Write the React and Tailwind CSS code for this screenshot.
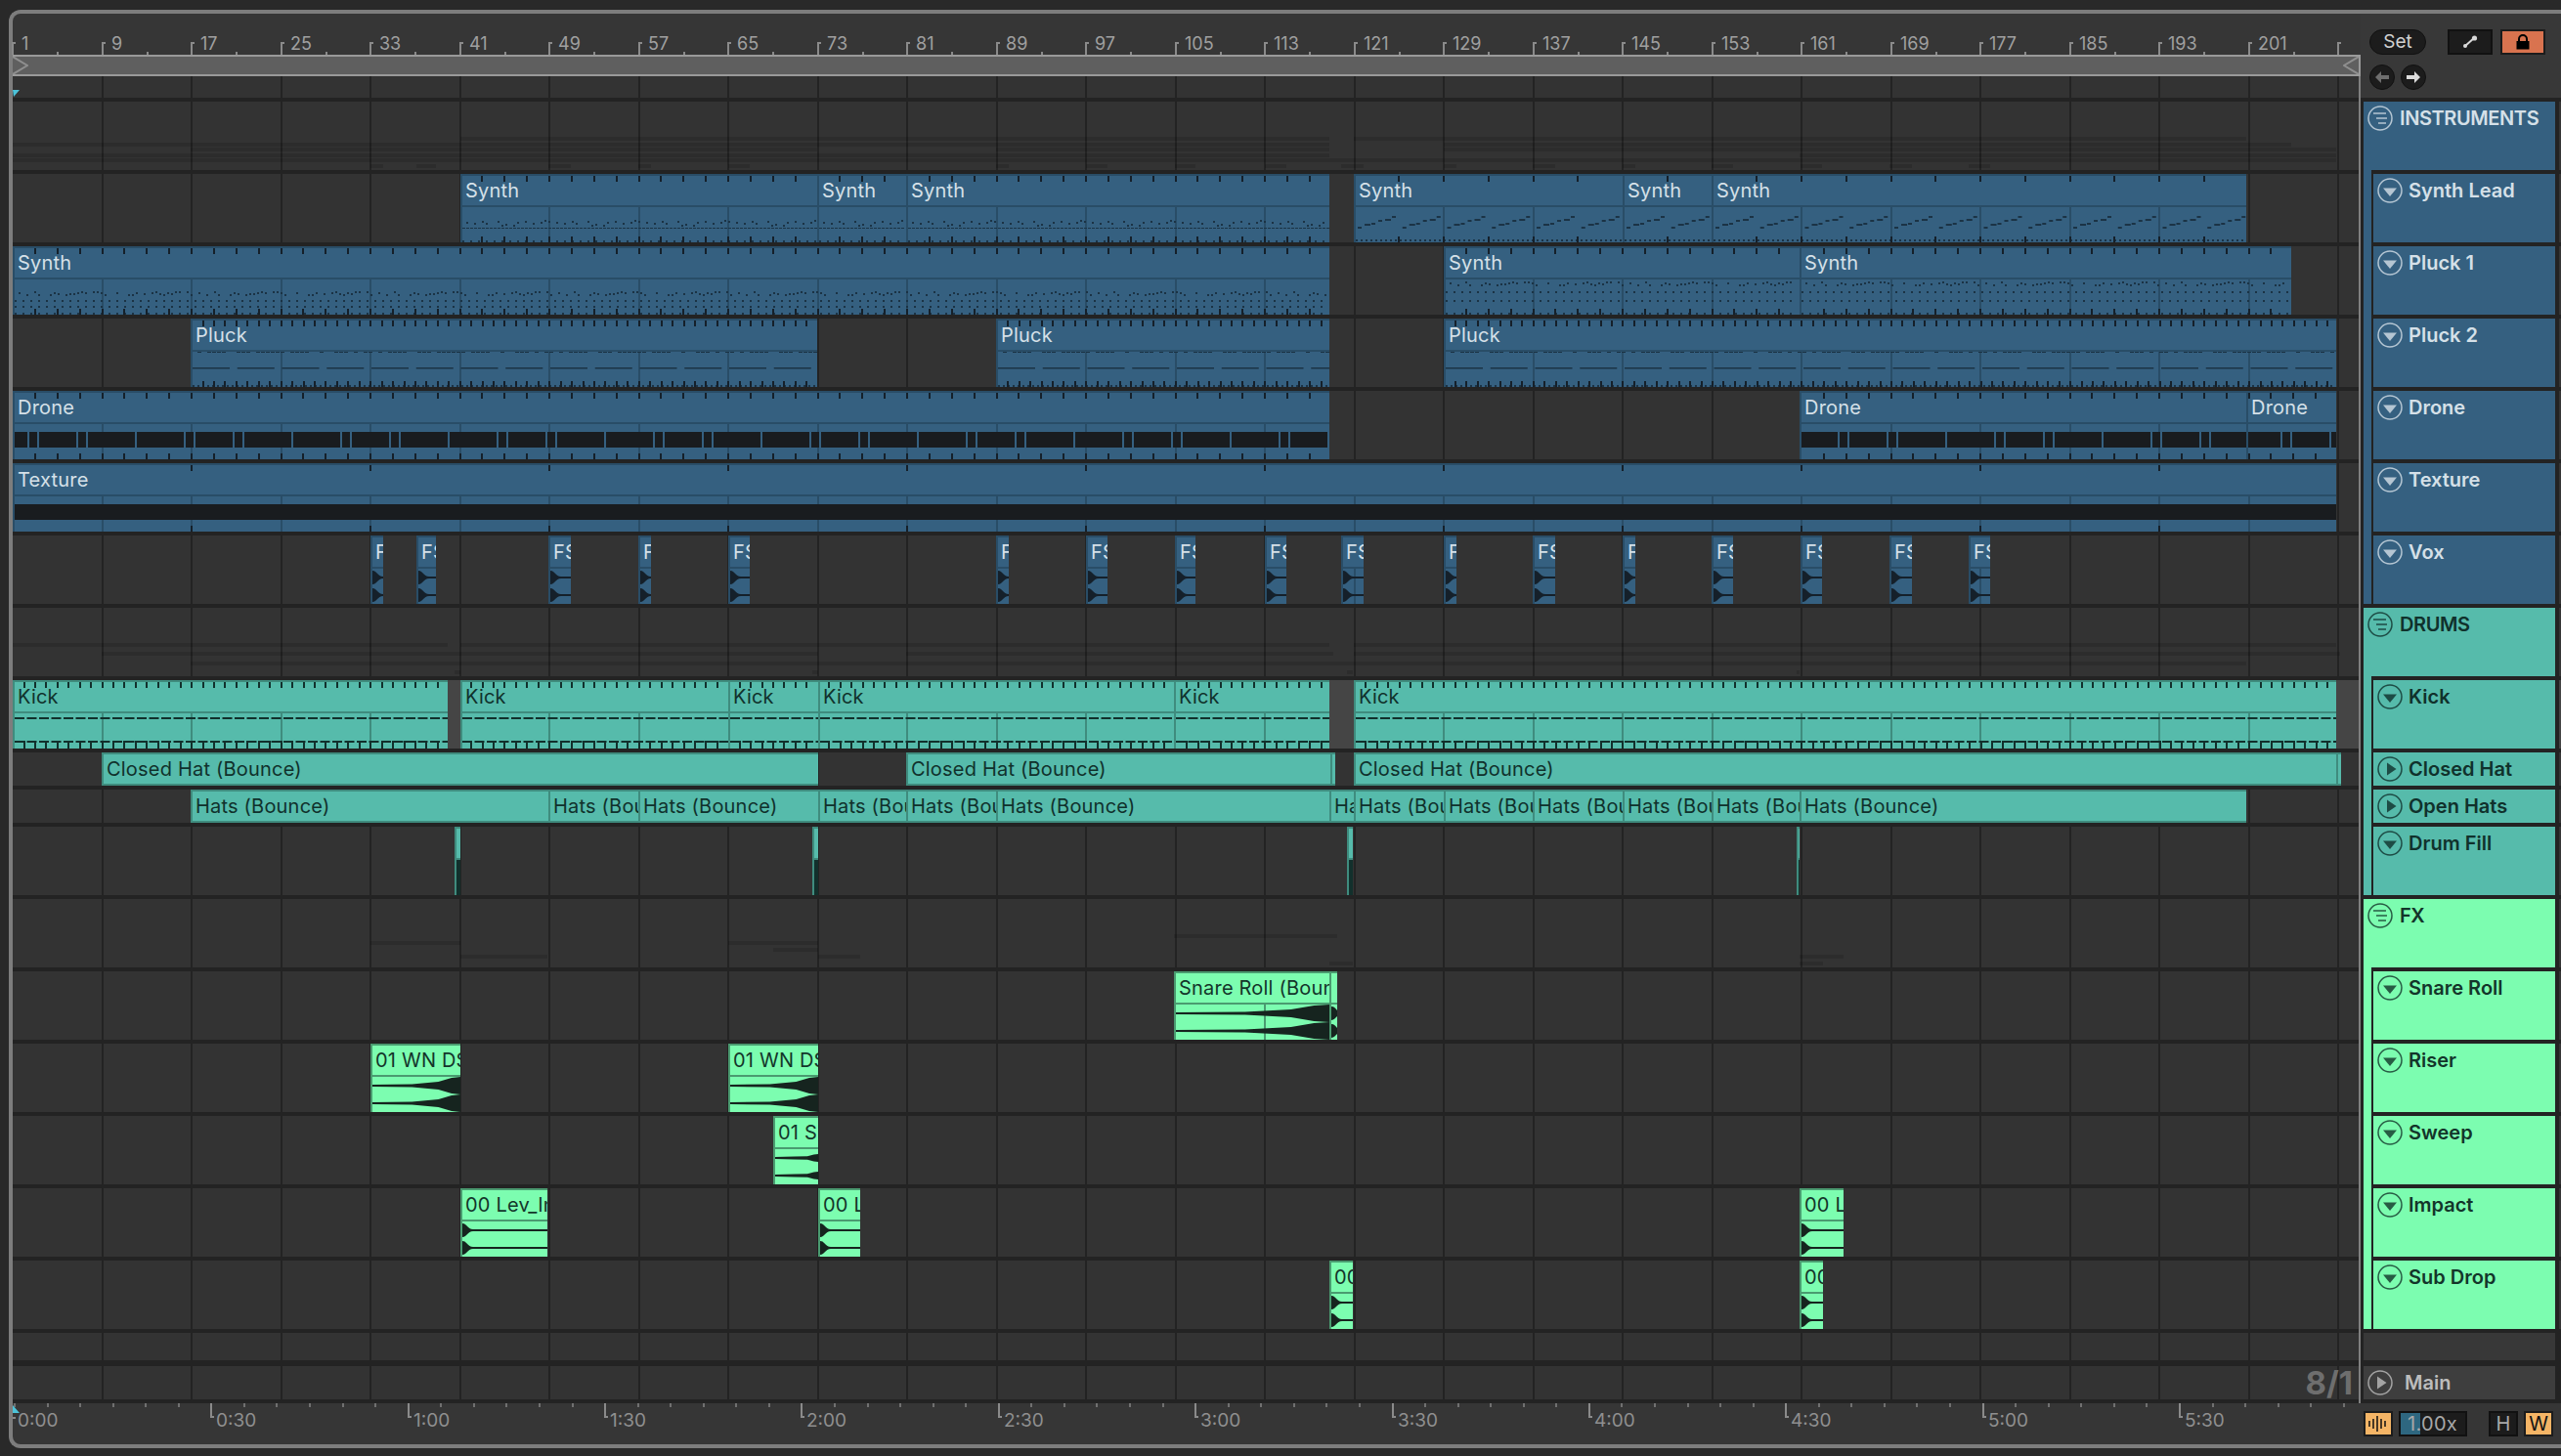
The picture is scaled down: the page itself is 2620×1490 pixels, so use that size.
const barX = (k) => Math.floor(12.6 + 91.5 * k);
const R = (x, y, w, h) => `M${x} ${y}h${w}v${h}h${-w}z`;
const rand = (i) => {
  const s = Math.sin(i * 12.9898) * 43758.5453;
  return s - Math.floor(s);
};

const themes = {
  blue: {
    bg: 'bg-[#356080]', text: 'text-[#d5e0e8]', border: 'border-[#294d67]', sep: 'bg-[#294d67]',
    line: '#294d67', dark: '#15202a', faint: '#1b3345',
  },
  teal: {
    bg: 'bg-[#56bbab]', text: 'text-[#10312c]', border: 'border-[#3f8c7e]', sep: 'bg-[#3f8c7e]',
    line: '#3f8c7e', dark: '#12302c', faint: '#3f8c7e',
  },
  mint: {
    bg: 'bg-[#7cfdb0]', text: 'text-[#13352a]', border: 'border-[#4a9b70]', sep: 'bg-[#4a9b70]',
    line: '#4a9b70', dark: '#16241f', faint: '#4a9b70',
  },
};

const fsClips = [
  [379, 392], [426, 446], [561, 584], [653, 666], [745, 767], [1019, 1032], [1111, 1133], [1202, 1223], [1294, 1316],
  [1372, 1395], [1477, 1490], [1568, 1591], [1660, 1673], [1751, 1773], [1842, 1864], [1933, 1956], [2014, 2036],
].map(([a, b]) => [a, b, 'FS', 'decay']);

const tracks = [
  { name: 'INSTRUMENTS', theme: 'blue', group: true, h: 70 },
  { name: 'Synth Lead', theme: 'blue', h: 70, clips: [
    [471, 836, 'Synth', 'riseDots'], [836, 927, 'Synth', 'riseDots'], [927, 1360, 'Synth', 'riseDots'],
    [1385, 1660, 'Synth', 'rise'], [1660, 1751, 'Synth', 'rise'], [1751, 2298, 'Synth', 'rise'],
  ] },
  { name: 'Pluck 1', theme: 'blue', h: 70, clips: [
    [13, 1360, 'Synth', 'dotsA'], [1477, 1841, 'Synth', 'dotsB'], [1841, 2344, 'Synth', 'dotsB'],
  ] },
  { name: 'Pluck 2', theme: 'blue', h: 70, clips: [
    [195, 836, 'Pluck', 'pluck'], [1019, 1360, 'Pluck', 'pluck'], [1477, 2390, 'Pluck', 'pluck'],
  ] },
  { name: 'Drone', theme: 'blue', h: 70, clips: [
    [13, 1360, 'Drone', 'drone'], [1841, 2298, 'Drone', 'drone'], [2298, 2390, 'Drone', 'drone'],
  ] },
  { name: 'Texture', theme: 'blue', h: 70, clips: [[13, 2390, 'Texture', 'band']] },
  { name: 'Vox', theme: 'blue', h: 70, last: true, clips: fsClips },
  { name: 'DRUMS', theme: 'teal', group: true, h: 70 },
  { name: 'Kick', theme: 'teal', h: 70, gaps: [[458, 471], [1360, 1385], [2390, 2413]], clips: [
    [13, 458, 'Kick', 'kick'], [471, 745, 'Kick', 'kick'], [745, 837, 'Kick', 'kick'], [837, 1201, 'Kick', 'kick'],
    [1201, 1360, 'Kick', 'kick'], [1385, 2390, 'Kick', 'kick'],
  ] },
  { name: 'Closed Hat', theme: 'teal', h: 34, closed: true, clips: [
    [104, 837, 'Closed Hat (Bounce)'], [927, 1361, 'Closed Hat (Bounce)'], [1361, 1364, ''],
    [1385, 2390, 'Closed Hat (Bounce)'], [2390, 2394, ''],
  ] },
  { name: 'Open Hats', theme: 'teal', h: 34, closed: true, clips: [
    [195, 561, 'Hats (Bounce)'], [561, 653, 'Hats (Bounce)'], [653, 837, 'Hats (Bounce)'], [837, 927, 'Hats (Bounce)'],
    [927, 1019, 'Hats (Bounce)'], [1019, 1360, 'Hats (Bounce)'], [1360, 1385, 'Hats (Bounce)'], [1385, 1477, 'Hats (Bounce)'],
    [1477, 1568, 'Hats (Bounce)'], [1568, 1660, 'Hats (Bounce)'], [1660, 1751, 'Hats (Bounce)'], [1751, 1841, 'Hats (Bounce)'],
    [1841, 2298, 'Hats (Bounce)'],
  ] },
  { name: 'Drum Fill', theme: 'teal', h: 70, last: true, clips: [
    [465, 471, '', 'fill'], [831, 837, '', 'fill'], [1378, 1384, '', 'fill'], [1838, 1841, '', 'fill'],
  ] },
  { name: 'FX', theme: 'mint', group: true, h: 70 },
  { name: 'Snare Roll', theme: 'mint', h: 70, clips: [
    [1201, 1360, 'Snare Roll (Bounce)', 'swell'], [1360, 1368, '', 'decay'],
  ] },
  { name: 'Riser', theme: 'mint', h: 70, clips: [[379, 471, '01 WN DS', 'swell'], [745, 837, '01 WN DS', 'swell']] },
  { name: 'Sweep', theme: 'mint', h: 70, clips: [[791, 837, '01 S', 'swellSmall']] },
  { name: 'Impact', theme: 'mint', h: 70, clips: [
    [471, 560, '00 Lev_In', 'decay'], [837, 880, '00 L', 'decay'], [1841, 1886, '00 L', 'decay'],
  ] },
  { name: 'Sub Drop', theme: 'mint', h: 70, last: true, clips: [[1360, 1384, '00', 'decay'], [1841, 1865, '00', 'decay']] },
];

// children of each group feed the faint overview lines in the group lane
tracks.forEach((t, i) => {
  if (!t.group) return;
  const kids = [];
  for (let j = i + 1; j < tracks.length && !tracks[j].group; j++) kids.push(tracks[j]);
  t.kids = kids;
});

function tickPath(x0, x1, pitch, y, h) {
  let d = '';
  for (let n = Math.ceil((x0 + 2 - 12.6) / pitch); 12.6 + pitch * n < x1 - 2; n++) {
    d += R(Math.floor(12.6 + pitch * n) - x0 - 2, y, 2, h);
  }
  return d;
}

function wave(c, w, end, kind) {
  if (kind === 'decay') {
    return `M0 ${c - 7}C5 ${c - 7} 5 ${c - 1} 11 ${c - 1}L${w} ${c - 1}L${w} ${c + 1}L11 ${c + 1}C5 ${c + 1} 5 ${c + 7} 0 ${c + 7}Z`;
  }
  return `M0 ${c - 1}L${w * 0.45} ${c - 1.5}L${w * 0.75} ${c - end * 0.45}L${w * 0.9} ${c - end * 0.9}L${w} ${c - end}L${w} ${c + end}L${w * 0.9} ${c + end * 0.9}L${w * 0.75} ${c + end * 0.45}L${w * 0.45} ${c + 1.5}L0 ${c + 1}Z`;
}

function drawClip(kind, x0, x1, theme) {
  const w = x1 - x0 - 2;
  let marks = '';
  let faint = '';
  let lines = '';
  let solid = '';
  for (let k = 0; k <= 27; k++) {
    const X = barX(k);
    if (X > x0 + 3 && X < x1 - 2) lines += R(X - x0 - 2, 32, 2, 38);
  }
  const slots = (step, fn) => {
    for (let n = 0, X = x0 + 2; X < x1 - 2; X += step, n++) fn(X - x0 - 2, n);
  };
  if (kind === 'dotsA' || kind === 'dotsB') {
    const rows = kind === 'dotsA' ? [46, 55, 61] : [36, 46, 55];
    marks += tickPath(x0, x1, 22.875, 2, 6) + tickPath(x0, x1, 22.875, 64, 6);
    slots(4, (x, n) => {
      if (rand(n % 46) > 0.4) faint += R(x, rows[0] + Math.floor(rand((n % 46) + 7) * 4), 2, 2);
      if (n % 2 === 0) faint += R(x, rows[1], 2, 2) + R(x, rows[2], 2, 2);
      if (n % 2 === 0) faint += R(x, 68, 2, 2);
    });
  } else if (kind === 'riseDots') {
    marks += tickPath(x0, x1, 22.875, 2, 6) + tickPath(x0, x1, 22.875, 64, 6);
    slots(4, (x, n) => {
      if (rand(n % 23) > 0.45) faint += R(x, 47 + Math.floor(rand((n % 23) + 3) * 6), 2, 2);
      faint += R(x, 55, 3, 1);
      if (n % 2 === 0) faint += R(x, 68, 2, 2);
    });
  } else if (kind === 'rise') {
    marks += tickPath(x0, x1, 45.75, 2, 6) + tickPath(x0, x1, 45.75, 64, 6);
    slots(45.75, (x) => {
      for (let i = 0; i < 6; i++) {
        faint += R(x + 2 + i * 7, 54 - i * 2 - (i % 2), i % 3 === 1 ? 6 : 4, 2);
      }
    });
    slots(5, (x) => {
      faint += R(x, 67, 2, 2);
    });
  } else if (kind === 'pluck') {
    marks += tickPath(x0, x1, 11.44, 2, 6) + tickPath(x0, x1, 11.44, 64, 6);
    slots(5, (x, n) => {
      if (rand(n % 37) > 0.35) faint += R(x, 34, 4, 1);
      faint += R(x, 68, 2, 2);
    });
    slots(45.75, (x) => {
      faint += R(x, 50, 38, 1.5);
    });
  } else if (kind === 'drone') {
    marks += tickPath(x0, x1, 22.875, 2, 6) + tickPath(x0, x1, 22.875, 64, 6);
    const segs = [[15, 8], [25, 38], [65, 8], [75, 48], [125, 48]];
    const shift = x0 === 13 ? 0 : x0 === 1841 ? 24 : 20;
    for (let p = -160; p < x1 - x0; p += 160) {
      segs.forEach(([s, l]) => {
        solid += R(p + s + shift, 42, l, 16);
      });
    }
  } else if (kind === 'band') {
    marks += tickPath(x0, x1, 183, 2, 6) + tickPath(x0, x1, 183, 64, 6);
    solid += R(0, 42, w, 16);
  } else if (kind === 'kick') {
    marks += tickPath(x0, x1, 11.44, 2, 6) + tickPath(x0, x1, 11.44, 62, 8);
    slots(12.5, (x) => {
      marks += R(x, 38, 10, 2) + R(x, 62, 10, 2);
    });
  } else if (kind === 'fill') {
    solid += R(0, 32, w, 38);
  } else if (kind === 'swell') {
    solid += wave(43, w, 9) + wave(61, w, 9);
  } else if (kind === 'swellSmall') {
    solid += wave(43, w, 4) + wave(61, w, 4);
  } else if (kind === 'decay') {
    solid += wave(43, w, 0, 'decay') + wave(61, w, 0, 'decay');
  }
  return (
    <svg className="absolute left-0 top-0" width={Math.max(w, 1)} height="70">
      <path d={lines} fill={theme.line} />
      <path d={solid} fill={kind === 'drone' || kind === 'band' ? '#191c1f' : theme.dark} />
      <path d={faint} fill={theme.faint} />
      <path d={marks} fill={theme.dark} />
    </svg>
  );
}

function Clip({ clip, theme, short }) {
  const [x0, x1, name, kind] = clip;
  if (short) {
    return (
      <div
        className={`absolute inset-y-0 border-y-2 border-l-2 overflow-hidden flex items-center pl-[3px] text-[20px] tracking-[0.2px] whitespace-nowrap ${theme.bg} ${theme.text} ${theme.border}`}
        style={{ left: x0 - 13, width: x1 - x0 }}
      >
        {name}
      </div>
    );
  }
  return (
    <div
      className={`absolute inset-y-0 border-l-2 overflow-hidden ${theme.bg} ${theme.text} ${theme.border}`}
      style={{ left: x0 - 13, width: x1 - x0 }}
    >
      {drawClip(kind, x0, x1, theme)}
      <div className={`relative h-[32px] border-t-2 flex items-center pl-[3px] text-[20px] tracking-[0.2px] whitespace-nowrap overflow-hidden ${theme.border}`}>
        {name}
      </div>
      <div className={`relative h-[2px] ${theme.sep}`} />
    </div>
  );
}

function GridLines() {
  return Array.from({ length: 26 }, (_, i) => (
    <div key={i} className="absolute inset-y-0 w-[2px] bg-[#232323]" style={{ left: barX(i + 1) - 13 }} />
  ));
}

function FoldIcon({ type }) {
  return (
    <svg width="26" height="26" viewBox="0 0 26 26" fill="none" stroke="currentColor" strokeWidth="1.5" className="shrink-0 opacity-80">
      <circle cx="13" cy="13" r="12" />
      {type === 'group' && <path d="M6 8H19M9 13H20M11 18H19" strokeWidth="1.6" />}
      {type === 'open' && <path d="M6 10.5H20L13 19Z" fill="currentColor" stroke="none" />}
      {type === 'closed' && <path d="M10 6.5L19.5 13L10 19.5Z" fill="currentColor" stroke="none" />}
    </svg>
  );
}

function TrackHeader({ track }) {
  const t = themes[track.theme];
  return (
    <div className="w-[196px] flex flex-col">
      <div className={`flex ${track.h === 34 ? 'h-[34px]' : 'h-[70px]'} ${t.bg} ${t.text}`}>
        {!track.group && <div className="w-[8px]" />}
        {!track.group && <div className="w-[2px] bg-[#232323]" />}
        <div className={`h-[34px] flex items-center pl-[4px] text-[20px] font-semibold whitespace-nowrap ${track.group ? 'gap-[7px] tracking-[-0.4px]' : 'gap-[6px]'}`}>
          <FoldIcon type={track.group ? 'group' : track.closed ? 'closed' : 'open'} />
          <span>{track.name}</span>
        </div>
      </div>
      <div className="h-[4px] bg-[#232323]">{!track.last && <div className={`h-full w-[8px] ${t.bg}`} />}</div>
    </div>
  );
}

function GroupGhost({ track }) {
  const n = track.kids.length;
  return track.kids.map((kid, i) =>
    kid.clips.map((c, j) => (
      <div
        key={`${i}-${j}`}
        className="absolute h-[4px] bg-black/[.12]"
        style={{ left: c[0] - 13, width: c[1] - c[0], top: Math.round(36 + (i * 28) / (n - 1)) }}
      />
    )),
  );
}

function TrackRow({ track }) {
  const t = themes[track.theme];
  return (
    <div className="flex bg-[#232323]">
      <div className="w-[2402px] border-r-2 border-[#7f7f7f] flex flex-col">
        <div className={`relative bg-[#333333] overflow-hidden ${track.h === 34 ? 'h-[34px]' : 'h-[70px]'}`}>
          <GridLines />
          {track.group && <GroupGhost track={track} />}
          {track.gaps &&
            track.gaps.map(([a, b]) => (
              <div key={a} className="absolute inset-y-0 bg-[#454545]" style={{ left: a - 13, width: b - a }} />
            ))}
          {track.clips && track.clips.map((c, i) => <Clip key={i} clip={c} theme={t} short={track.h === 34} />)}
        </div>
        <div className="h-[4px]" />
      </div>
      <div className="w-[3px]" />
      <TrackHeader track={track} />
      <div className="w-[4px]" />
      <div className={`w-[2px] ${track.gaps ? 'bg-[#454545]' : 'bg-[#363636]'} ${track.h === 34 ? 'h-[34px]' : 'h-[70px]'}`} />
    </div>
  );
}

function TopRuler() {
  return (
    <div className="relative h-[42px] text-[18px] text-[#a0a0a0]">
      {Array.from({ length: 27 }, (_, k) => (
        <div key={k}>
          <div className="absolute top-[29px] h-[13px] w-[2px] bg-[#8a8a8a]" style={{ left: barX(k) - 13 }} />
          <div className="absolute top-[29px] h-[2px] w-[4px] bg-[#8a8a8a]" style={{ left: barX(k) - 13 }} />
          {k < 26 && (
            <div className="absolute top-[19px] leading-[24px]" style={{ left: barX(k) - 3 }}>
              {1 + 8 * k}
            </div>
          )}
          {k < 26 && <div className="absolute top-[39px] h-[3px] w-[2px] bg-[#8a8a8a]" style={{ left: barX(k) + 33 }} />}
        </div>
      ))}
    </div>
  );
}

const times = ['0:00', '0:30', '1:00', '1:30', '2:00', '2:30', '3:00', '3:30', '4:00', '4:30', '5:00', '5:30'];

function BottomRuler() {
  return (
    <div className="relative h-[42px] text-[19px] text-[#8f8f8f]">
      {Array.from({ length: 72 }, (_, i) => (
        <div key={i} className="absolute top-0 h-[4px] w-[2px] bg-[#707070]" style={{ left: Math.round(1 + 33.56 * i) }} />
      ))}
      {times.map((t, i) => (
        <div key={t}>
          {i > 0 && <div className="absolute top-0 h-[15px] w-[2px] bg-[#8a8a8a]" style={{ left: Math.round(1 + 201.36 * i) }} />}
          {i > 0 && <div className="absolute top-[13px] h-[2px] w-[4px] bg-[#8a8a8a]" style={{ left: Math.round(1 + 201.36 * i) }} />}
          <div className="absolute top-[6px] leading-[24px]" style={{ left: Math.round(5 + 201.36 * i + (i > 0 ? 2 : 0)) }}>
            {t}
          </div>
        </div>
      ))}
      <svg className="absolute left-0 top-[2px]" width="8" height="8">
        <path d="M0 0L7 8L0 8Z" fill="#4cc3d9" />
      </svg>
      <div className="absolute left-0 top-[14px] h-[2px] w-[3px] bg-[#8a8a8a]" />
    </div>
  );
}

function LoopBar() {
  return (
    <div className="relative h-[22px] border-y-2 border-r-2 border-[#9a9a9a] bg-[#5f5f5f]">
      <svg className="absolute left-0 top-0" width="16" height="18" fill="none" stroke="#8f8f8f" strokeWidth="2">
        <path d="M0 0L15 9L0 18" />
      </svg>
      <svg className="absolute right-0 top-0" width="16" height="18" fill="none" stroke="#8f8f8f" strokeWidth="2">
        <path d="M16 0L1 9L16 18" />
      </svg>
    </div>
  );
}

function RoundArrow({ dir, dim }) {
  return (
    <div className="w-[26px] h-[26px] rounded-full bg-[#1c1c1c] border border-[#111] flex items-center justify-center">
      <svg width="14" height="12" viewBox="0 0 14 12" fill={dim ? '#6e6e6e' : '#dcdcdc'}>
        {dir === 'left' ? <path d="M0 6L6 0V4H14V8H6V12Z" /> : <path d="M14 6L8 0V4H0V8H8V12Z" />}
      </svg>
    </div>
  );
}

function TopControls() {
  return (
    <div className="flex-1 h-[86px] pl-[9px] pt-[16px] flex flex-col gap-[10px] bg-[#383838]">
      <div className="flex items-center">
        <div className="w-[58px] h-[26px] rounded-full bg-[#1c1c1c] border border-[#111] flex items-center justify-center text-[19px] text-[#d0d0d0]">
          Set
        </div>
        <div className="ml-[22px] w-[46px] h-[26px] bg-[#1c1c1c] border-2 border-[#111] flex items-center justify-center">
          <svg width="16" height="14" viewBox="0 0 16 14" stroke="#d8d8d8" fill="#d8d8d8" strokeWidth="2">
            <path d="M3 11L12 3" />
            <circle cx="3" cy="11" r="2" stroke="none" />
            <circle cx="12.5" cy="3" r="2.6" stroke="none" />
          </svg>
        </div>
        <div className="ml-[8px] w-[46px] h-[26px] bg-[#d9734f] border-2 border-[#1c1c1c] flex items-center justify-center">
          <svg width="16" height="16" viewBox="0 0 16 16">
            <path d="M4 7V5a4 4 0 0 1 8 0v2" fill="none" stroke="#000" strokeWidth="2" />
            <rect x="1.5" y="7" width="13" height="8.5" fill="#000" />
          </svg>
        </div>
      </div>
      <div className="flex gap-[6px]">
        <RoundArrow dir="left" dim />
        <RoundArrow dir="right" />
      </div>
    </div>
  );
}

function BottomControls() {
  return (
    <div className="flex-1 h-[42px] pl-[3px] pt-[8px] flex items-start text-[20px]">
      <div className="w-[30px] h-[26px] bg-[#f5b566] border-2 border-[#1c1c1c] flex items-center justify-center">
        <svg width="20" height="16" viewBox="0 0 20 16" fill="none" stroke="#111" strokeWidth="1.5">
          <path d="M1 5V11M5 3V13M9 0V16M13 3V13M17 5V11" />
        </svg>
      </div>
      <div className="relative ml-[6px] w-[70px] h-[26px] bg-[#1c1c1c] border-2 border-[#111] flex items-center pl-[7px] text-[#a8a8a8] tracking-[0.3px]">
        <div className="absolute left-0 inset-y-0 w-[20px] bg-[#2e6780]" />
        <span className="relative">1.00x</span>
      </div>
      <div className="ml-[22px] w-[30px] h-[26px] bg-[#1c1c1c] border-2 border-[#111] flex items-center justify-center text-[#a8a8a8]">H</div>
      <div className="ml-[6px] w-[30px] h-[26px] bg-[#f5b566] border-2 border-[#1c1c1c] flex items-center justify-center text-[#111]">W</div>
    </div>
  );
}

export default function App() {
  return (
    <div className="w-[2620px] h-[1490px] bg-[#292929] pt-[10px] pl-[9px] overflow-hidden font-[Inter,sans-serif]">
      <div className="w-[2611px] h-[1472px] border-4 border-r-0 border-[#7d7d7d] rounded-l-xl bg-[#363636] flex flex-col">
        <div className="flex">
          <div className="w-[2402px] flex flex-col">
            <TopRuler />
            <LoopBar />
            <div className="relative h-[22px] border-r-2 border-[#7f7f7f] bg-[#333333]">
              <GridLines />
              <svg className="absolute left-0 top-[14px]" width="8" height="8">
                <path d="M0 0L7 0L1 7Z" fill="#4cc3d9" />
              </svg>
            </div>
          </div>
          <TopControls />
        </div>
        <div className="flex h-[4px] bg-[#232323]">
          <div className="w-[2402px] border-r-2 border-[#7f7f7f]" />
        </div>
        {tracks.map((t) => (
          <TrackRow key={t.name} track={t} />
        ))}
        <div className="flex h-[34px] bg-[#232323]">
          <div className="w-[2402px] border-r-2 border-[#7f7f7f]">
            <div className="relative h-[28px] bg-[#333333] overflow-hidden">
              <GridLines />
            </div>
          </div>
          <div className="w-[3px]" />
          <div className="w-[196px] h-[28px] bg-[#383838]" />
        </div>
        <div className="flex h-[38px] bg-[#232323]">
          <div className="w-[2402px] border-r-2 border-[#7f7f7f]">
            <div className="relative h-[34px] bg-[#333333] overflow-hidden">
              <GridLines />
              <div className="absolute right-[6px] top-[-1px] text-[33px] leading-[36px] font-bold text-[#6e6e6e]">8/1</div>
            </div>
          </div>
          <div className="w-[3px]" />
          <div className="w-[196px] h-[34px] bg-[#3e3e3e] flex items-center pl-[4px] gap-[12px] text-[20px] font-semibold text-[#bdbdbd]">
            <FoldIcon type="closed" />
            <span>Main</span>
          </div>
        </div>
        <div className="flex">
          <div className="w-[2402px]">
            <BottomRuler />
          </div>
          <BottomControls />
        </div>
      </div>
    </div>
  );
}
